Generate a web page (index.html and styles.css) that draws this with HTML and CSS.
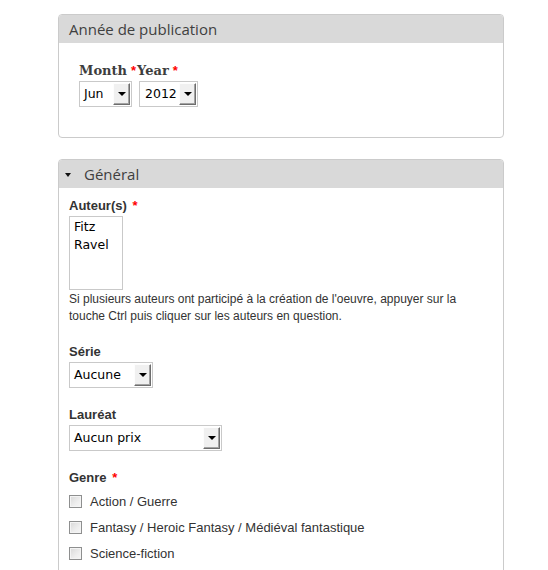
FILE: index.html
```html
<!DOCTYPE html>
<html lang="fr">
<head>
<meta charset="utf-8">
<title>Formulaire</title>
<link rel="stylesheet" href="styles.css">
</head>
<body>
<div class="page">
  <section class="fieldset fs-date">
    <div class="legend">Année de publication</div>
    <div class="fs-body">
      <div class="date-item">
        <div class="date-labels"><span class="serif-label">Month</span><span class="req">*</span><span class="serif-label">Year</span><span class="req">*</span></div>
        <div class="date-selects">
          <div class="select w-month"><span class="val">Jun</span><span class="btn"><span class="arrow"></span></span></div>
          <div class="select w-year"><span class="val">2012</span><span class="btn"><span class="arrow"></span></span></div>
        </div>
      </div>
    </div>
  </section>

  <section class="fieldset fs-general">
    <div class="legend legend-toggle"><span class="toggle"></span>Général</div>
    <div class="fs-body body-general">
      <div class="form-item">
        <div class="label">Auteur(s) <span class="req">*</span></div>
        <div class="multi">
          <div class="opt">Fitz</div>
          <div class="opt">Ravel</div>
        </div>
        <div class="help">Si plusieurs auteurs ont participé à la création de l'oeuvre, appuyer sur la touche Ctrl puis cliquer sur les auteurs en question.</div>
      </div>
      <div class="form-item">
        <div class="label">Série</div>
        <div class="select w-serie"><span class="val">Aucune</span><span class="btn"><span class="arrow"></span></span></div>
      </div>
      <div class="form-item">
        <div class="label">Lauréat</div>
        <div class="select w-laureat"><span class="val">Aucun prix</span><span class="btn"><span class="arrow"></span></span></div>
      </div>
      <div class="form-item">
        <div class="label">Genre <span class="req">*</span></div>
        <div class="checks">
          <div class="check"><span class="box"></span>Action / Guerre</div>
          <div class="check"><span class="box"></span>Fantasy / Heroic Fantasy / Médiéval fantastique</div>
          <div class="check"><span class="box"></span>Science-fiction</div>
        </div>
      </div>
    </div>
  </section>
</div>
</body>
</html>
```

FILE: styles.css
```css
html, body {
  margin: 0;
  padding: 0;
  background: #fff;
}

body {
  font-family: "Liberation Sans", Arial, sans-serif;
  font-size: 13px;
  color: #333;
}

.page {
  padding: 14px 0 0 58px;
}

.fieldset {
  width: 444px;
  border: 1px solid #cbcbcb;
  border-radius: 4px;
  background: #fff;
}

.fs-general {
  margin-top: 21px;
}

.legend {
  height: 28px;
  line-height: 28px;
  background: #d9d9d9;
  border-radius: 3px 3px 0 0;
  padding-left: 10px;
  font-family: "Open Sans", "Noto Sans", sans-serif;
  font-size: 15px;
  color: #3f3f3f;
}

.legend-toggle {
  display: flex;
  align-items: center;
  padding-left: 6px;
}

.toggle {
  width: 0;
  height: 0;
  border-left: 3.5px solid transparent;
  border-right: 3.5px solid transparent;
  border-top: 4px solid #111;
  margin-right: 13px;
  margin-top: 2px;
}

.fs-body {
  padding: 19px 10px 30px 10px;
}

.date-item {
  padding-left: 10px;
}

.date-labels {
  height: 18px;
  line-height: 18px;
  margin-bottom: 1px;
}

.serif-label {
  font-family: "DejaVu Serif", "Liberation Serif", serif;
  font-weight: bold;
  font-size: 13px;
  color: #3d3d3d;
}

.req {
  color: #f00;
  font-weight: bold;
  margin-left: 2px;
}

.serif-label + .req {
  margin-left: 4px;
  margin-right: 1px;
}

.date-selects {
  display: flex;
  gap: 7px;
}

.select {
  display: flex;
  box-sizing: border-box;
  height: 26px;
  border: 1px solid #c9c9c9;
  background: #fff;
}

.select .val {
  flex: 1;
  padding-left: 4px;
  line-height: 24px;
  font-family: "DejaVu Sans", Verdana, sans-serif;
  font-size: 12.5px;
  color: #000;
}

.select .btn {
  box-sizing: border-box;
  width: 17px;
  margin: 1px 1px 1px 0;
  background: #f0f0f0;
  border-top: 1px solid #fdfdfd;
  border-left: 1px solid #fdfdfd;
  border-right: 1px solid #6d6d6d;
  border-bottom: 1px solid #6d6d6d;
  box-shadow: inset -1px -1px 0 #a3a3a3;
  display: flex;
  align-items: center;
  justify-content: center;
}

.arrow {
  width: 0;
  height: 0;
  border-left: 4px solid transparent;
  border-right: 4px solid transparent;
  border-top: 4px solid #000;
}

.w-month { width: 53px; }
.w-year { width: 59px; }
.w-year .val { padding-left: 5px; }
.w-serie { width: 84px; }
.w-laureat { width: 153px; }

.body-general {
  padding: 9px 10px 20px 10px;
}

.form-item + .form-item {
  margin-top: 18px;
}

.label {
  font-weight: bold;
  line-height: 18px;
  height: 18px;
  margin-bottom: 1px;
}

.multi {
  box-sizing: border-box;
  width: 54px;
  height: 74px;
  border: 1px solid #c9c9c9;
  padding: 1px 0 0 4px;
}

.opt {
  font-family: "DejaVu Sans", Verdana, sans-serif;
  font-size: 12.5px;
  line-height: 18px;
  color: #000;
}

.help {
  font-size: 12px;
  line-height: 17px;
  margin-top: 1px;
  color: #333;
  width: 410px;
}

.checks {
  margin-top: 1px;
}

.check {
  display: flex;
  align-items: center;
  height: 26px;
  color: #333;
}

.box {
  box-sizing: border-box;
  width: 13px;
  height: 13px;
  border: 1px solid #8e8f8f;
  background: linear-gradient(135deg, #d8d8d8 0%, #eeeeee 60%, #f6f6f6 100%);
  box-shadow: inset 0 0 0 1px #f4f4f4;
  margin-right: 8px;
}
```
